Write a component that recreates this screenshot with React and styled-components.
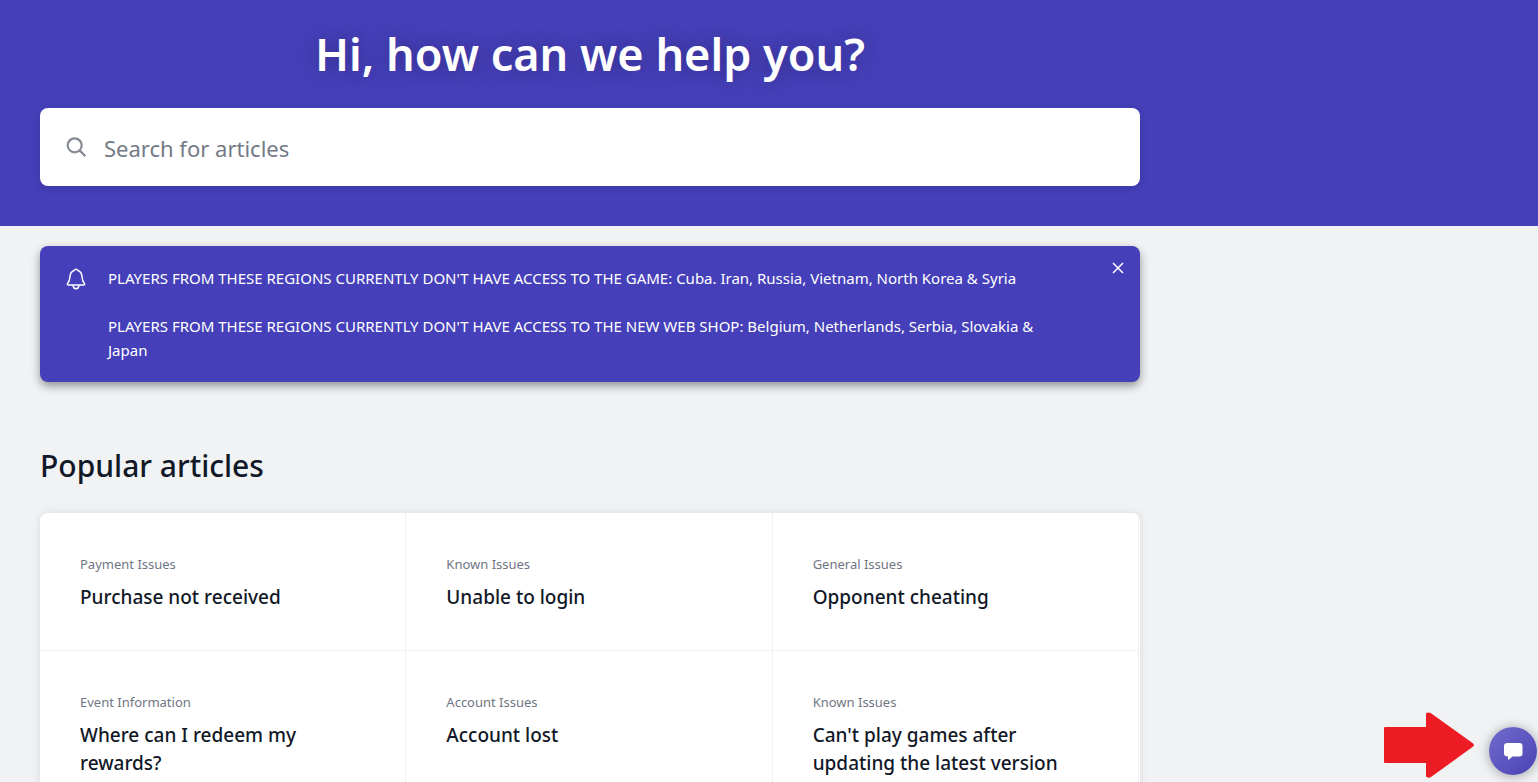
import React, { useState } from "react";
import styled, { createGlobalStyle } from "styled-components";

const GlobalStyle = createGlobalStyle`
  *, *::before, *::after { box-sizing: border-box; }
  body {
    margin: 0;
    background: #f0f2f4;
    color: #111827;
    font-family: "Segoe UI", "Noto Sans", "Open Sans", sans-serif;
    font-size: 15px;
    line-height: 24px;
  }
  h1, h2, h3, p { margin: 0; }
`;

const Hero = styled.header`
  background: #453fb9;
  padding: 20px 0 40px;
`;

const Container = styled.div`
  width: 100%;
  max-width: 1180px;
  padding: 0 40px;
`;

const HeroTitle = styled.h1`
  color: #fff;
  font-size: 45px;
  line-height: 68px;
  font-weight: 600;
  text-align: center;
  text-shadow: 0 0 20px rgba(0, 0, 0, 0.3);
  margin-bottom: 20px;
`;

const SearchBox = styled.form`
  display: flex;
  align-items: center;
  gap: 16px;
  height: 78px;
  padding: 0 24px;
  background: #fff;
  border-radius: 8px;
  box-shadow: 0 2px 8px rgba(0, 0, 0, 0.12);
  color: #858a94;
`;

const SearchInput = styled.input`
  flex: 1;
  min-width: 0;
  height: 48px;
  padding: 2px 0 0;
  border: 0;
  outline: 0;
  background: transparent;
  color: #111827;
  font-family: inherit;
  font-size: 22px;

  &::placeholder { color: #747a86; opacity: 1; }
`;

const Notice = styled.section`
  display: flex;
  align-items: flex-start;
  gap: 20px;
  margin-top: 20px;
  padding: 20px 12px 20px 24px;
  background: #453fb9;
  color: #fff;
  border-radius: 8px;
  box-shadow: 0 4px 10px rgba(0, 0, 0, 0.4);
`;

const NoticeIcon = styled.span`
  display: flex;
  flex: none;
  padding-top: 1px;
`;

const NoticeText = styled.div`
  flex: 1;
  display: grid;
  gap: 24px;
  padding-right: 20px;
`;

const CloseButton = styled.button`
  display: flex;
  flex: none;
  align-items: center;
  justify-content: center;
  width: 20px;
  height: 20px;
  margin-top: -8px;
  padding: 0;
  border: 0;
  background: transparent;
  color: #fff;
  cursor: pointer;
`;

const SectionTitle = styled.h2`
  margin-top: 64px;
  font-size: 30px;
  line-height: 40px;
  font-weight: 500;
`;

const ArticleGrid = styled.div`
  display: grid;
  grid-template-columns: repeat(3, 1fr);
  margin: 27px 0 40px;
  padding-right: 1px;
  overflow: hidden;
  background: #fff;
  border-radius: 8px;
  box-shadow: 0 0 8px rgba(0, 0, 0, 0.1);
`;

const Article = styled.a`
  padding: 40px 40px 39px;
  border: solid #f0f1f3;
  border-width: 0 1px 1px 0;
  color: inherit;
  text-decoration: none;
`;

const Category = styled.p`
  margin-bottom: 8px;
  color: #6f7683;
  font-size: 13px;
  line-height: 22px;
`;

const ArticleTitle = styled.h3`
  font-size: 19px;
  line-height: 28px;
  font-weight: 500;
`;

const ChatButton = styled.button`
  position: fixed;
  right: 1px;
  bottom: 7px;
  display: flex;
  align-items: center;
  justify-content: center;
  width: 48px;
  height: 48px;
  padding: 0;
  border: 0;
  border-radius: 50%;
  background: linear-gradient(135deg, #716cca, #4b41b6);
  box-shadow: 0 1px 12px rgba(0, 0, 0, 0.35);
  cursor: pointer;
`;

const Pointer = styled.svg`
  position: fixed;
  right: 64px;
  bottom: 4px;
`;

const articles = [
  ["Payment Issues", "Purchase not received"],
  ["Known Issues", "Unable to login"],
  ["General Issues", "Opponent cheating"],
  ["Event Information", "Where can I redeem my rewards?"],
  ["Account Issues", "Account lost"],
  ["Known Issues", "Can't play games after updating the latest version"],
];

export default function App() {
  const [noticeOpen, setNoticeOpen] = useState(true);

  return (
    <>
      <GlobalStyle />
      <Hero>
        <Container>
          <HeroTitle>Hi, how can we help you?</HeroTitle>
          <SearchBox role="search" onSubmit={(e) => e.preventDefault()}>
            <svg width="24" height="24" viewBox="0 0 24 24" fill="none" stroke="currentColor" strokeWidth="2.2" aria-hidden="true">
              <circle cx="10.7" cy="10.3" r="7" />
              <path d="M15.6 15.400 21.400 21.200" />
            </svg>
            <SearchInput type="search" placeholder="Search for articles" aria-label="Search for articles" />
          </SearchBox>
        </Container>
      </Hero>
      <Container as="main">
        {noticeOpen && (
          <Notice>
            <NoticeIcon>
              <svg width="24" height="24" viewBox="0 0 24 24" fill="none" stroke="#fff" strokeWidth="1.5" strokeLinejoin="round" aria-hidden="true">
                <path d="M12 2.300C13 2.300 13.600 2.900 13.900 3.500C16.600 4.500 17.700 6.700 17.900 9C18.200 12.700 19 14.900 20.400 16.500C20.900 17.300 20.600 18 19.700 18H4.300C3.400 18 3.100 17.300 3.600 16.500C5 14.900 5.800 12.700 6.100 9C6.300 6.700 7.400 4.500 10.100 3.500C10.400 2.900 11 2.300 12 2.300Z" />
                <path d="M9 18.200C9.200 20.500 10.400 21.700 12 21.700S14.800 20.500 15 18.200" />
              </svg>
            </NoticeIcon>
            <NoticeText>
              <p>PLAYERS FROM THESE REGIONS CURRENTLY DON'T HAVE ACCESS TO THE GAME: Cuba. Iran, Russia, Vietnam, North Korea &amp; Syria</p>
              <p>PLAYERS FROM THESE REGIONS CURRENTLY DON'T HAVE ACCESS TO THE NEW WEB SHOP: Belgium, Netherlands, Serbia, Slovakia &amp; Japan</p>
            </NoticeText>
            <CloseButton type="button" aria-label="Close" onClick={() => setNoticeOpen(false)}>
              <svg width="12" height="12" viewBox="0 0 12 12" fill="none" stroke="currentColor" strokeWidth="1.5" aria-hidden="true">
                <path d="M1 1 11 11M11 1 1 11" />
              </svg>
            </CloseButton>
          </Notice>
        )}
        <SectionTitle>Popular articles</SectionTitle>
        <ArticleGrid>
          {articles.map(([category, title]) => (
            <Article href="#" key={title}>
              <Category>{category}</Category>
              <ArticleTitle>{title}</ArticleTitle>
            </Article>
          ))}
        </ArticleGrid>
      </Container>
      <Pointer width="90" height="66" viewBox="0 0 90 66" aria-hidden="true">
        <path fill="#ed1c24" d="M1 15H42V1.500Q44-.5 47 1.200L89.200 31.500Q90.600 33 89.200 34.500L47 65Q44 66.500 42 64.500V51H1Q0 51 0 50V16Q0 15 1 15Z" />
      </Pointer>
      <ChatButton type="button" aria-label="Open chat">
        <svg width="20" height="18" viewBox="0 0 20 18" aria-hidden="true">
          <path fill="#fff" d="M4.500 1H16.500Q19.500 1 19.500 4V11.500Q19.500 14.500 16.500 14.500H9.500L6 17.500Q5 18 5 17V14.500H4.500Q1 14.500 1 11.500V4Q1 1 4.500 1Z" />
        </svg>
      </ChatButton>
    </>
  );
}
